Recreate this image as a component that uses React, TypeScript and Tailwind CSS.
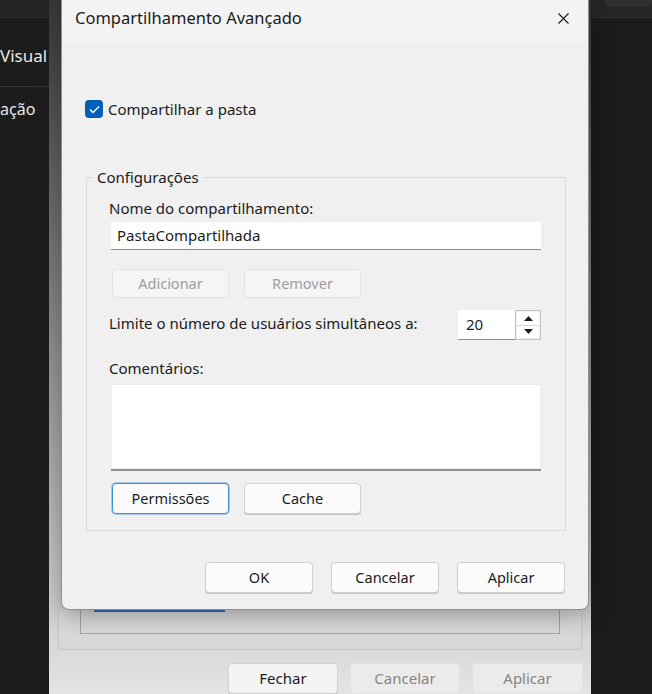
import { X } from "lucide-react";

const FONT = { fontFamily: '"Noto Sans", "Segoe UI", sans-serif' };

// ── Small pieces ───────────────────────────────────────────────────────────

function WinButton({
  label, disabled = false, focused = false, className = "",
}: { label: string; disabled?: boolean; focused?: boolean; className?: string }) {
  let look = "bg-[#fbfbfb] border-[#d0d0d0] text-[#1b1b1b] shadow-[0_1px_0_#c4c4c4]";
  if (disabled) look = "bg-[#f5f5f5] border-[#e2e2e2] text-[#9d9d9d]";
  if (focused) look = "bg-[#fbfbfb] border-[#3d8fd8] text-[#1b1b1b] ring-1 ring-[#3d8fd8]/40";
  return (
    <div className={`flex items-center justify-center rounded-[4px] border text-[14.5px] ${look} ${className}`}>
      {label}
    </div>
  );
}

function SpinBox({ value }: { value: number }) {
  return (
    <div className="flex h-[30px]">
      <div className="flex w-[57px] items-center border-b border-[#8a8a8a] bg-white pl-[8px] text-[15px]">{value}</div>
      <div className="flex w-[26px] flex-col border border-[#c4c4c4] bg-[#f0f0f0] p-[1px]">
        <div className="flex flex-1 items-center justify-center border-b border-[#d6d6d6] bg-white">
          <svg width="9" height="5" viewBox="0 0 9 5"><path d="M0 5 L4.5 0 L9 5 Z" fill="#1b1b1b" /></svg>
        </div>
        <div className="flex flex-1 items-center justify-center bg-white">
          <svg width="9" height="5" viewBox="0 0 9 5"><path d="M0 0 L4.5 5 L9 0 Z" fill="#1b1b1b" /></svg>
        </div>
      </div>
    </div>
  );
}

// ── Dialog ─────────────────────────────────────────────────────────────────

function AdvancedSharing() {
  return (
    <div className="absolute left-[61px] top-[-6px] flex h-[616px] w-[528px] flex-col overflow-hidden rounded-[8px] border border-[#8e8e8e] bg-[#f0f0f0] text-[#1b1b1b] shadow-[0_6px_22px_rgba(0,0,0,0.3)]">
      {/* Title bar */}
      <div className="flex h-[47px] shrink-0 items-center justify-between bg-[#f3f3f3] pl-[13px] pr-[15px]">
        <span className="text-[16.5px]">Compartilhamento Avançado</span>
        <X size={19} strokeWidth={1.4} className="text-[#1b1b1b]" />
      </div>

      <div className="flex flex-1 flex-col pl-[24px] pr-[24px]">
        <label className="-ml-[1px] mt-[57px] flex items-center gap-[5px] text-[15px] leading-[20px]">
          <span className="flex h-[18px] w-[18px] items-center justify-center rounded-[4px] bg-[#005fb8]">
            <svg width="11" height="9" viewBox="0 0 11 9"><path d="M1 4.5 L4 7.5 L10 1.5" fill="none" stroke="white" strokeWidth="1.3" /></svg>
          </span>
          Compartilhar a pasta
        </label>

        {/* Configurações group */}
        <fieldset className="mt-[49px] h-[363px] w-[480px] border border-[#d9d9d9] pl-[22px] pr-[24px]">
          <legend className="ml-[-16px] px-[4px] text-[15px] leading-[18px]">Configurações</legend>
          <p className="mt-[13px] text-[15px] leading-[18px]">Nome do compartilhamento:</p>
          <div className="ml-[2px] mt-[5px] flex h-[28px] items-center border-b border-[#8a8a8a] bg-white pl-[6px] text-[15px]">
            PastaCompartilhada
          </div>
          <div className="ml-[3px] mt-[19px] flex gap-[15px]">
            <WinButton label="Adicionar" disabled className="h-[29px] w-[117px]" />
            <WinButton label="Remover" disabled className="h-[29px] w-[117px]" />
          </div>
          <div className="mt-[12px] flex items-center justify-between">
            <span className="-mt-[4px] text-[15px]">Limite o número de usuários simultâneos a:</span>
            <SpinBox value={20} />
          </div>
          <p className="mt-[19px] text-[15px] leading-[18px]">Comentários:</p>
          <div className="ml-[2px] mt-[7px] h-[87px] border-b-2 border-[#8f8f8f] bg-white shadow-[inset_0_0_0_1px_#ececec]" />
          <div className="ml-[3px] mt-[12px] flex gap-[15px]">
            <WinButton label="Permissões" focused className="h-[31px] w-[117px]" />
            <WinButton label="Cache" className="h-[31px] w-[117px]" />
          </div>
        </fieldset>

        {/* Footer */}
        <div className="-mr-[1px] mt-[31px] flex justify-end gap-[18px]">
          <WinButton label="OK" className="h-[31px] w-[108px]" />
          <WinButton label="Cancelar" className="h-[31px] w-[108px]" />
          <WinButton label="Aplicar" className="h-[31px] w-[108px]" />
        </div>
      </div>
    </div>
  );
}

// ── Page ───────────────────────────────────────────────────────────────────

export default function App() {
  return (
    <div className="relative h-[694px] w-[652px] overflow-hidden bg-[#1b1b1b]" style={FONT}>
      {/* dark app on the left */}
      <div className="absolute left-0 top-0 flex h-[694px] w-[49px] flex-col bg-[#1c1c1c] text-[#e8e8e8]">
        <div className="h-[18px] border-b border-[#2e2e2e] bg-[#242424]" />
        <div className="flex h-[69px] items-center border-b border-[#333] pt-[8px] text-[17px]">Visual</div>
        <div className="pt-[11px] text-[16px] leading-[22px]">ação</div>
      </div>

      {/* dark app on the right */}
      <div className="absolute right-0 top-0 flex h-[694px] w-[62px] flex-col bg-[#1b1b1b]">
        <div className="h-[18px] border-b border-[#303030] bg-[#262626] pl-[15px]">
          <div className="h-[7px] rounded-b-[5px] bg-[#303030]" />
        </div>
      </div>

      {/* properties window behind */}
      <div className="absolute left-[49px] top-0 flex h-[694px] w-[542px] flex-col overflow-hidden bg-gradient-to-b from-[#383838] via-[#8e8e8e] to-[#e4e4e4] px-[9px]">
        <div className="h-[609px] shrink-0" />
        <div className="flex h-[41px] shrink-0 flex-col rounded-[2px] border border-t-0 border-[#c4c4c4] bg-[#d8d8d8] px-[21px]">
          <div className="h-[25px] border border-t-0 border-[#a4a4a4] pl-[13px]">
            <div className="h-[3px] w-[131px] bg-[#2a6cbc]" />
          </div>
        </div>
        <div className="-mr-[1px] mt-[13px] flex shrink-0 justify-end gap-[12px]">
          <WinButton label="Fechar" className="h-[31px] w-[110px] !text-[15px] !bg-[#f4f4f4]" />
          <WinButton label="Cancelar" disabled className="h-[31px] w-[110px] !text-[15px] !bg-[#ebebeb] !text-[#858585]" />
          <WinButton label="Aplicar" disabled className="h-[31px] w-[111px] !text-[15px] !bg-[#ebebeb] !text-[#858585]" />
        </div>
      </div>

      <AdvancedSharing />
    </div>
  );
}
